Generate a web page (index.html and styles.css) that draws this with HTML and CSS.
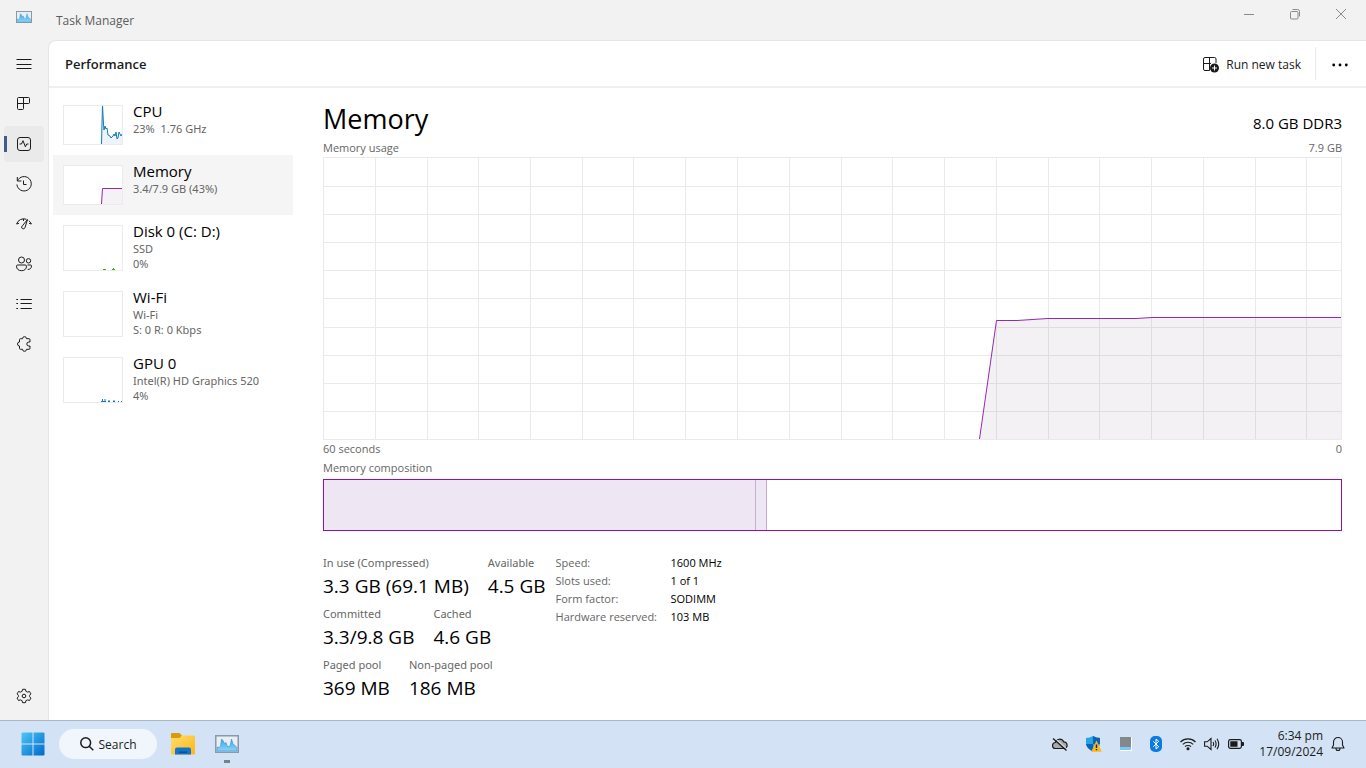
FILE: index.html
```html
<!DOCTYPE html>
<html lang="en">
<head>
<meta charset="utf-8">
<title>Task Manager</title>
<link rel="stylesheet" href="styles.css">
</head>
<body>
<svg class="defs" width="0" height="0" aria-hidden="true">
  <defs>
    <linearGradient id="win" x1="0" y1="0" x2="1" y2="1"><stop offset="0" stop-color="#4cc8f8"/><stop offset="1" stop-color="#0068c8"/></linearGradient>
    <linearGradient id="fold" x1="0" y1="0" x2="1" y2="1"><stop offset="0" stop-color="#ffdc70"/><stop offset="1" stop-color="#fcb714"/></linearGradient>
    <linearGradient id="pulse" x1="0" y1="0" x2="0" y2="1"><stop offset="0" stop-color="#3aa6e6"/><stop offset="1" stop-color="#8ad4fa"/></linearGradient>
    <symbol id="tm" viewBox="0 0 24 18">
      <rect x=".75" y=".75" width="22.5" height="16.5" fill="#e9eef3" stroke="#8b98a5" stroke-width="1.5"/>
      <path d="M2 16V12L4 12.500 5.500 11 6.500 4 8 5.500 9.500 8.500 11 7.500 12.500 11.500 14.500 11.500 15.500 9 16.500 4 18 9 20 10.500 22 12.500V16Z" fill="url(#pulse)" stroke="#2c97d8" stroke-width=".6"/>
    </symbol>
  </defs>
</svg>

<div class="window">
  <header class="titlebar">
    <svg class="app-icon" width="16" height="12"><use href="#tm"/></svg>
    <span class="title">Task Manager</span>
    <div class="controls">
      <button aria-label="Minimize"><svg width="12" height="12" viewBox="0 0 12 12"><path d="M1 6.500H11"/></svg></button>
      <button aria-label="Restore"><svg width="12" height="12" viewBox="0 0 12 12"><rect x="1.500" y="3.500" width="7.500" height="7.500" rx="1"/><path d="M3.500 1.500H8.500Q10.500 1.500 10.500 3.500V8.500"/></svg></button>
      <button aria-label="Close"><svg width="12" height="12" viewBox="0 0 12 12"><path d="M1 1 11 11M11 1 1 11"/></svg></button>
    </div>
  </header>

  <div class="body">
    <nav class="rail" aria-label="Sections">
      <button aria-label="Navigation"><svg width="16" height="16" viewBox="0 0 16 16"><path d="M.5 3.500H15.500M.5 8.500H15.500M.5 12.500H15.500"/></svg></button>
      <button aria-label="Processes"><svg width="16" height="16" viewBox="0 0 16 16"><path d="M2.500 1.500H12.500Q13.500 1.500 13.500 2.500V6.500Q13.500 7.500 12.500 7.500H1.500M7.500 1.500V12.500Q7.500 13.500 6.500 13.500H2.500Q1.500 13.500 1.500 12.500V2.500Q1.500 1.500 2.500 1.500"/></svg></button>
      <button class="active" aria-label="Performance" aria-current="page"><svg width="16" height="16" viewBox="0 0 16 16"><rect x="1.500" y="1.500" width="13" height="13" rx="2.500"/><path d="M3.500 8H5.500L7 4.700 9.400 10.800 10.700 8H12.500"/></svg></button>
      <button aria-label="App history"><svg width="16" height="16" viewBox="0 0 16 16"><path d="M1.300 1V5H5.400M1.500 4.800A7.200 7.200 0 1 1 .9 8.500M7.500 4.500V8.500H10.500"/></svg></button>
      <button aria-label="Startup apps"><svg width="16" height="16" viewBox="0 0 16 16"><path d="M.6 8A7.500 7.500 0 0 1 10.500 3.300M12.800 4.700A7.500 7.500 0 0 1 15.400 8M.6 8 3 7.300M15.400 8 13 7.300M11.500 3.500 6.400 9.800A1.700 1.700 0 0 0 6.200 12.400 1.700 1.700 0 0 0 9 11.500ZM7.500 3V5"/></svg></button>
      <button aria-label="Users"><svg width="16" height="16" viewBox="0 0 16 16"><circle cx="5.500" cy="4" r="3"/><circle cx="12.500" cy="4.800" r="2.200"/><path d="M1.700 9H9.300Q10.500 9 10.500 10.200C10.500 13 8.500 14.700 5.500 14.700S.5 13 .5 10.200Q.5 9 1.700 9ZM11.500 9H14.500Q15.500 9 15.500 10C15.500 12.300 14 13.500 11.700 13.400"/></svg></button>
      <button aria-label="Details"><svg width="16" height="16" viewBox="0 0 16 16"><path d="M4.500 3.500H15.800M4.500 7.500H15.800M4.500 12.500H15.800M.3 3.500H2M.3 7.500H2M.3 12.500H2"/></svg></button>
      <button aria-label="Services"><svg width="16" height="16" viewBox="0 0 16 16"><path d="M6.500 2.700A2 2 0 0 1 10.500 2.700H13Q14 2.700 14 3.700V6H12.800A2 2 0 0 0 12.800 10H14V12.300Q14 13.300 13 13.300H10.500A2 2 0 0 1 6.500 13.300H4.500Q3.500 13.300 3.500 12.300V10A2 2 0 0 1 3.500 6V3.700Q3.500 2.700 4.500 2.700Z"/></svg></button>
      <button class="settings" aria-label="Settings"><svg width="16" height="16" viewBox="0 0 16 16"><circle cx="8" cy="8" r="1.800"/><path d="M6.600 1.300H9.400L9.900 3.300 11.500 4.100 13.500 3.500 14.900 5.900 13.600 7.300V8.700L14.900 10.100 13.500 12.500 11.500 11.900 9.900 12.700 9.400 14.700H6.600L6.100 12.700 4.500 11.900 2.500 12.500 1.100 10.100 2.400 8.700V7.300L1.100 5.900 2.500 3.500 4.500 4.100 6.100 3.300Z" stroke-linejoin="round"/></svg></button>
    </nav>

    <main class="page">
      <div class="page-head">
        <h1>Performance</h1>
        <button class="run"><svg width="16" height="16" viewBox="0 0 16 16" fill="none" stroke="#1b1b1b"><path d="M6.500 13.500H2Q.5 13.500 .5 12V2Q.5 .5 2 .5H11.500Q13 .5 13 2V6M6.500 .5V13.500M.5 6.500H8"/><circle cx="11.500" cy="11" r="4.500" fill="#1b1b1b" stroke="none"/><path d="M11.500 8.500V13.500M9 11H14" stroke="#fff"/></svg>Run new task</button>
        <button class="more" aria-label="More options"><svg width="16" height="4" viewBox="0 0 16 4"><circle cx="1.700" cy="2" r="1.400"/><circle cx="8" cy="2" r="1.400"/><circle cx="14.300" cy="2" r="1.400"/></svg></button>
      </div>

      <div class="content">
        <div class="resources">
          <button class="res">
            <svg class="thumb short" viewBox="0 0 60 40"><path fill="#eef4fa" d="M38 39 39 0 41 24 44 27 47 31 52 28 54 31 59 30V39Z"/><path stroke="#117dbb" d="M38.500 39 39.500 0 40.500 19 41 25 42 21 43 24 44 23 45 30 47 31 48 33 50 31 51 29 52 31 53 27 54 34 55 33 56 27 58 31 59 29"/></svg>
            <span class="info"><span class="name">CPU</span><span class="sub">23%&nbsp; 1.76 GHz</span></span>
          </button>
          <button class="res selected">
            <svg class="thumb short" viewBox="0 0 60 40"><path fill="#f4f2f4" d="M38 39 39 23H59V39Z"/><path stroke="#9528b4" d="M38.500 39 39.500 23.500H59"/></svg>
            <span class="info"><span class="name">Memory</span><span class="sub">3.4/7.9 GB (43%)</span></span>
          </button>
          <button class="res">
            <svg class="thumb" viewBox="0 0 60 46"><path stroke="#4da60c" d="M40 44.500H43M49 44.500H52M50.500 43V45"/></svg>
            <span class="info"><span class="name">Disk 0 (C: D:)</span><span class="sub">SSD</span><span class="sub">0%</span></span>
          </button>
          <button class="res">
            <svg class="thumb" viewBox="0 0 60 46"></svg>
            <span class="info"><span class="name">Wi-Fi</span><span class="sub">Wi-Fi</span><span class="sub">S: 0 R: 0 Kbps</span></span>
          </button>
          <button class="res">
            <svg class="thumb" viewBox="0 0 60 46"><path stroke="#117dbb" d="M38 44.500H43M39.500 42V45M42 42V45M45 44.500H47M46 43V45M50 44.500H52M51 43V45M55 44.500H56M58 44.500H59"/></svg>
            <span class="info"><span class="name">GPU 0</span><span class="sub">Intel(R) HD Graphics 520</span><span class="sub">4%</span></span>
          </button>
        </div>

        <section class="detail">
          <div class="row heading"><h2>Memory</h2><span class="spec">8.0 GB DDR3</span></div>
          <div class="row label"><span>Memory usage</span><span>7.9 GB</span></div>
          <svg class="graph" viewBox="0 0 1019 283" preserveAspectRatio="none" role="img" aria-label="Memory usage graph">
            <path class="grid" d="M52.500 0V283M104.500 0V283M155.500 0V283M207.500 0V283M259.500 0V283M310.500 0V283M362.500 0V283M414.500 0V283M466.500 0V283M518.500 0V283M569.500 0V283M621.500 0V283M673.500 0V283M725.500 0V283M776.500 0V283M828.500 0V283M880.500 0V283M932.500 0V283M983.500 0V283M0 29.500H1019M0 57.500H1019M0 85.500H1019M0 113.500H1019M0 141.500H1019M0 170.500H1019M0 198.500H1019M0 226.500H1019M0 254.500H1019"/>
            <rect class="grid" x=".5" y=".5" width="1018" height="282"/>
            <path class="area" d="M656.500 282 673.500 163.500H694L725 161.500H813L829 160.500H1018V282Z"/>
            <path class="line" d="M656.500 282 673.500 163.500H694L725 161.500H813L829 160.500H1018"/>
          </svg>
          <div class="row label axis"><span>60 seconds</span><span>0</span></div>
          <div class="row label"><span>Memory composition</span></div>
          <div class="composition" role="img" aria-label="Memory composition"><span class="used"></span><span class="modified"></span></div>

          <div class="stats">
            <div class="figures">
              <dl><div><dt>In use (Compressed)</dt><dd>3.3 GB (69.1 MB)</dd></div><div><dt>Available</dt><dd>4.5 GB</dd></div></dl>
              <dl><div><dt>Committed</dt><dd>3.3/9.8 GB</dd></div><div><dt>Cached</dt><dd>4.6 GB</dd></div></dl>
              <dl><div><dt>Paged pool</dt><dd>369 MB</dd></div><div><dt>Non-paged pool</dt><dd>186 MB</dd></div></dl>
            </div>
            <table class="facts">
              <tr><th scope="row">Speed:</th><td>1600 MHz</td></tr>
              <tr><th scope="row">Slots used:</th><td>1 of 1</td></tr>
              <tr><th scope="row">Form factor:</th><td>SODIMM</td></tr>
              <tr><th scope="row">Hardware reserved:</th><td>103 MB</td></tr>
            </table>
          </div>
        </section>
      </div>
    </main>
  </div>
</div>

<footer class="taskbar">
  <button class="task" aria-label="Start"><svg width="24" height="24" viewBox="0 0 24 24"><path fill="url(#win)" d="M1.500 .5H11.500V11.500H.5V1.500Q.5 .5 1.500 .5ZM12.500 .5H22.500Q23.500 .5 23.500 1.500V11.500H12.500ZM.5 12.500H11.500V23.500H1.500Q.5 23.500 .5 22.500ZM12.500 12.500H23.500V22.500Q23.500 23.500 22.500 23.500H12.500Z"/></svg></button>
  <button class="search"><svg width="14" height="14" viewBox="0 0 14 14"><circle cx="5.700" cy="5.700" r="4.900"/><path d="M9.200 9.200 13.300 13.300"/></svg>Search</button>
  <button class="task" aria-label="File Explorer"><svg width="24" height="22" viewBox="0 0 24 22"><path fill="#d99a0b" d="M1 0H8.500L11 2.500V6H0V1Q0 0 1 0Z"/><path fill="url(#fold)" d="M0 5H8.500L11 2.500H23Q24 2.500 24 3.500V20.500Q24 21.500 23 21.500H1Q0 21.500 0 20.500Z"/><path fill="#1074c8" d="M4 21.500V16.500Q4 14.500 6 14.500H18Q20 14.500 20 16.500V21.500Z"/><path fill="#0a4f98" d="M8 18.500H16V20H8Z"/></svg></button>
  <button class="task running" aria-label="Task Manager"><svg width="24" height="18"><use href="#tm"/></svg></button>

  <div class="tray">
    <button aria-label="OneDrive"><svg width="16" height="16" viewBox="0 0 16 16"><path d="M3.800 12.500A3 3 0 0 1 3.300 6.500 4.500 4.500 0 0 1 11.700 5.800 3.400 3.400 0 0 1 12.500 12.500Z" fill="#aaa" stroke="#1b1b1b" stroke-width="1.200"/><path d="M3.300 2.600 15.500 13.600" stroke="#d3e3f5" stroke-width="1.200"/><path d="M1 2.500 14.500 14.500" stroke="#1b1b1b" stroke-width="1.300"/></svg></button>
    <button aria-label="Windows Security"><svg width="16" height="16" viewBox="0 0 16 16"><path fill="#27a3e8" d="M7 0Q10 2 14 2V8Q13 13 7 15.500Q1 13 0 8V2Q4 2 7 0Z"/><path fill="#0b63b5" d="M7 0Q10 2 14 2V8H7ZM0 8H7V15.500Q1 13 0 8Z"/><path fill="#fcb81c" d="M10.500 4.500 15.800 15.800H5.200Z"/><path stroke="#222" stroke-width="1.400" d="M10.500 8.500V12M10.500 13V14.300"/></svg></button>
    <button aria-label="Touchpad"><svg width="12" height="14" viewBox="0 0 12 14"><path fill="#fff" d="M0 0H12V14H0Z"/><path fill="#83888c" d="M0 0H11V10H0Z"/><path fill="#7bc8f4" d="M0 10H11V13H0Z"/></svg></button>
    <button aria-label="Bluetooth"><svg width="12" height="16" viewBox="0 0 12 16"><rect width="12" height="16" rx="5" fill="#0a7be0"/><path d="M3.300 5.300 8.700 10.700 6 13V3L8.700 5.300 3.300 10.700" fill="none" stroke="#fff"/></svg></button>
    <button class="system" aria-label="Network, volume and battery">
      <svg width="16" height="16" viewBox="0 0 16 16" fill="none" stroke="#1b1b1b" stroke-width="1.100"><path d="M.5 6A10.500 10.500 0 0 1 15.500 6M2.800 8.400A7.300 7.300 0 0 1 13.200 8.400M5 10.700A4.200 4.200 0 0 1 11 10.700"/><circle cx="8" cy="12.800" r="1" fill="#1b1b1b"/></svg>
      <svg width="16" height="16" viewBox="0 0 16 16" fill="none" stroke="#1b1b1b" stroke-width="1.100"><path d="M.6 5.800H3.200L7 2.500V13.500L3.200 10.200H.6ZM9 6Q10.300 8 9 10M11 4.500Q13.200 8 11 11.500M13 2.800Q16.500 8 13 13.200"/></svg>
      <svg width="16" height="16" viewBox="0 0 16 16"><rect x=".6" y="3.600" width="12.800" height="8.800" rx="1.800" fill="none" stroke="#1b1b1b" stroke-width="1.200"/><path fill="#1b1b1b" d="M2.300 5.300H9.500V10.700H2.300ZM14 6H15Q16 6 16 7V9Q16 10 15 10H14Z"/></svg>
    </button>
    <button class="clock"><span>6:34 pm</span><span>17/09/2024</span></button>
    <button aria-label="Notifications"><svg width="14" height="16" viewBox="0 0 14 16" fill="none" stroke="#1b1b1b" stroke-width="1.100"><path d="M1 12 2.500 9V6A4.500 4.500 0 0 1 11.500 6V9L13 12ZM5 12.500A2 2 0 0 0 9 12.500" stroke-linejoin="round"/></svg></button>
  </div>
</footer>
</body>
</html>
```
FILE: styles.css
```css
* { box-sizing: border-box; }

body {
  margin: 0;
  min-height: 100vh;
  display: flex;
  flex-direction: column;
  background: #f2f2f2;
  color: #000;
  font-family: "Open Sans", "Noto Sans", sans-serif;
  font-size: 12px;
}

button {
  border: 0;
  padding: 0;
  background: none;
  color: inherit;
  font: inherit;
}

svg { display: block; flex: none; }
.defs { position: absolute; }
h1, h2, dl, dd { margin: 0; }

.window, .body { flex: 1; display: flex; }
.window { flex-direction: column; }

.titlebar { display: flex; height: 40px; }
.app-icon { margin: 11px 16px 0; }
.title { margin-left: 8px; line-height: 42px; color: #5c5c5c; }
.controls { display: flex; margin: 0 2px 0 auto; }
.controls button {
  display: grid;
  place-items: center;
  width: 46px;
  height: 28px;
}
.controls svg { fill: none; stroke: #8a8a8a; }

.rail {
  display: flex;
  flex-direction: column;
  gap: 4px;
  width: 48px;
  padding: 6px 4px;
}
.rail button {
  display: grid;
  place-items: center;
  height: 36px;
  border-radius: 4px;
}
.rail svg { fill: none; stroke: #1b1b1b; }
.rail .active {
  background: linear-gradient(#425d85, #425d85) 0 50% / 3px 16px no-repeat #eaeaea;
}
.rail .settings { margin-top: auto; }

.page {
  flex: 1;
  display: flex;
  flex-direction: column;
  min-width: 0;
  background: #fff;
  border: solid #e5e5e5;
  border-width: 1px 0 0 1px;
  border-top-left-radius: 8px;
}
.page-head {
  display: flex;
  align-items: center;
  height: 47px;
  padding-left: 16px;
  border-bottom: 2px solid #efefef;
}
h1 { font-size: 13px; font-weight: 600; color: #1b1b1b; }
.run {
  display: flex;
  align-items: center;
  gap: 7px;
  margin-left: auto;
  padding: 3px 14px 0 0;
  line-height: 30px;
  border-right: 1px solid #eaeaea;
  color: #1b1b1b;
}
.more { display: grid; place-items: center; width: 50px; height: 32px; padding: 3px 2px 0 0; }

.content { flex: 1; display: flex; gap: 30px; padding: 7px 24px 18px 4px; }
.resources { width: 240px; flex: none; }
.res {
  display: flex;
  gap: 10px;
  width: 100%;
  padding: 6px 10px 4px;
  text-align: left;
}
.selected { background: #f5f5f5; }
.thumb {
  width: 60px;
  height: 46px;
  margin: 4px 0 6px;
  background: #fff;
  outline: 1px solid #ebebeb;
  outline-offset: -1px;
  fill: none;
}
.thumb.short { height: 40px; }
.info { display: flex; flex-direction: column; }
.name { font-size: 15px; line-height: 20px; }
.sub, dt { font-family: "Noto Sans", sans-serif; font-size: 11px; color: #666; }
.sub { line-height: 15px; }

.detail { flex: 1; display: flex; flex-direction: column; min-width: 0; }
.row { display: flex; justify-content: space-between; }
.heading { height: 44px; align-items: center; }
h2 { font-size: 27px; font-weight: 400; line-height: 44px; padding-top: 3px; }
.spec { font-size: 15px; line-height: 20px; padding-top: 12px; }
.label { font-size: 11px; line-height: 18px; color: #666; }
.axis { padding-bottom: 1px; }
.graph { flex: 1; width: 100%; height: 0; min-height: 160px; }
.graph path, .graph rect { vector-effect: non-scaling-stroke; }
.grid { fill: none; stroke: #eaeaea; shape-rendering: crispEdges; }
.area { fill: rgba(60, 20, 80, .06); }
.line { fill: none; stroke: #9528b4; }

.composition {
  display: flex;
  height: 52px;
  margin-top: 2px;
  border: 1px solid #8b12ae;
}
.composition span { background: #eee6f2; border-right: 1px solid #c9acd4; }
.used { width: 42.500%; }
.modified { width: 11px; }

.stats { display: flex; gap: 10px; margin-top: 23px; }
.figures { display: flex; flex-direction: column; gap: 5px; }
dl { display: flex; gap: 19px; }
dt { line-height: 18px; }
dd { font-size: 19px; line-height: 28px; white-space: nowrap; }
.facts { align-self: flex-start; border-collapse: collapse; font-size: 11px; line-height: 18px; }
.facts th { width: 115px; padding: 0; font-weight: 400; text-align: left; color: #666; }
.facts td { padding: 0; }

.taskbar {
  display: flex;
  align-items: center;
  height: 48px;
  padding: 0 21px 1px;
  background: #d3e3f5;
  border-top: 1px solid #a9b6c6;
  color: #1b1b1b;
}
.task { display: grid; place-items: center; width: 24px; height: 46px; }
.search {
  display: flex;
  align-items: center;
  justify-content: center;
  gap: 5px;
  width: 98px;
  height: 30px;
  margin: 0 14px;
  border-radius: 15px;
  background: #f1f6fc;
}
.search svg { fill: none; stroke: #1b1b1b; stroke-width: 1.5; }
.running {
  margin-left: 20px;
  background: radial-gradient(#77818c, #77818c) 50% 39px / 6px 3px no-repeat;
}
.tray { display: flex; align-items: center; gap: 18px; margin-left: auto; }
.system { display: flex; gap: 8px; }
.clock {
  display: flex;
  flex-direction: column;
  margin: 0 -10px 0 -3px;
  text-align: right;
  line-height: 16px;
}
```
